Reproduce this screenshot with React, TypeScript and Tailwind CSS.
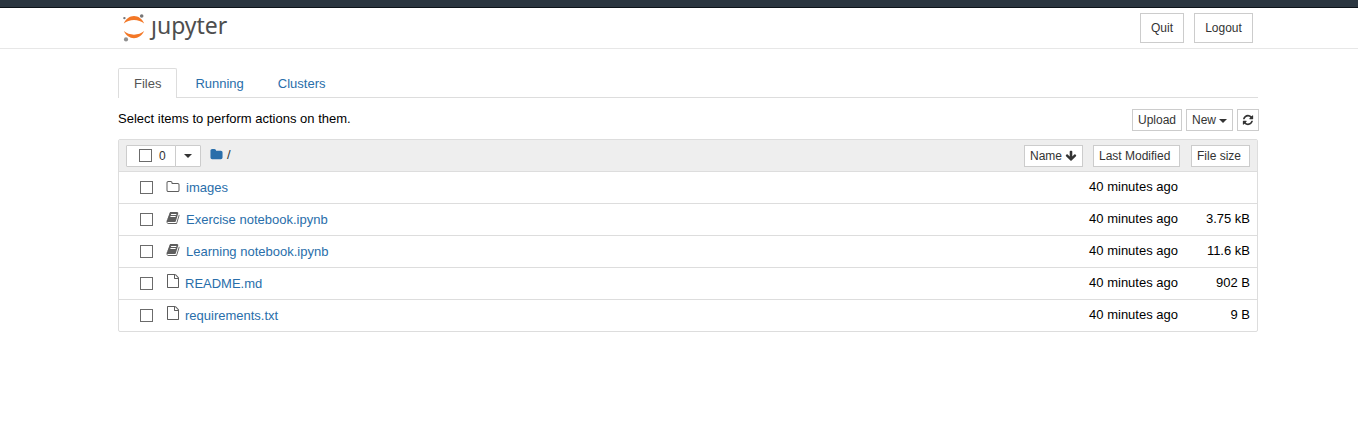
import React from "react";

const ICONS = {
  folder:
    "M1728 608v704q0 92-66 158t-158 66h-1216q-92 0-158-66t-66-158v-960q0-92 66-158t158-66h320q92 0 158 66t66 158v32h672q92 0 158 66t66 158z",
  folderOpen:
    "M1600 1312v-704q0-40-28-68t-68-28h-704q-40 0-68-28t-28-68v-64q0-40-28-68t-68-28h-320q-40 0-68 28t-28 68v960q0 40 28 68t68 28h1216q40 0 68-28t28-68zm128-704v704q0 92-66 158t-158 66h-1216q-92 0-158-66t-66-158v-960q0-92 66-158t158-66h320q92 0 158 66t66 158v32h672q92 0 158 66t66 158z",
  file: "M1596 380q28 28 48 76t20 88v1152q0 40-28 68t-68 28h-1344q-40 0-68-28t-28-68v-1600q0-40 28-68t68-28h896q40 0 88 20t76 48zm-444-244v376h376q-10-29-22-41l-313-313q-12-12-41-22zm384 1528v-1024h-416q-40 0-68-28t-28-68v-416h-768v1536h1280z",
  book: "M1703 478q40 57 18 129l-275 906q-19 64-76.5 107.5t-122.5 43.5h-923q-77 0-148.5-53.5t-99.5-131.5q-24-67-2-127 0-4 3-27t4-37q1-8-3-21.5t-3-19.5q2-11 8-21t16.5-23.5 16.5-23.5q23-38 45-91.5t30-91.5q3-10 .5-30t-.5-28q3-11 17-28t17-23q21-36 42-92t25-90q1-9-2.5-32t.5-28q4-13 22-30.5t22-22.5q19-26 42.5-84.5t27.5-96.5q1-8-3-25.5t-2-26.5q2-8 9-18t18-23 17-21q8-12 16.5-30.5t15-35 16-36 19.5-32 26.5-23.5 36-11.5 47.5 5.5l-1 3q38-9 51-9h761q74 0 114 56t18 130l-274 906q-36 119-71.5 153.5t-128.5 34.5h-869q-27 0-38 15-11 16-1 43 24 70 144 70h923q29 0 56-15.5t35-41.5l300-987q7-22 5-57 38 15 59 43zm-1064 2q-4 13 2 22.5t20 9.5h608q13 0 25.5-9.5t16.5-22.5l21-64q4-13-2-22.5t-20-9.5h-608q-13 0-25.5 9.5t-16.5 22.5zm-83 256q-4 13 2 22.5t20 9.5h608q13 0 25.5-9.5t16.5-22.5l21-64q4-13-2-22.5t-20-9.5h-608q-13 0-25.5 9.5t-16.5 22.5z",
  refresh:
    "M1639 1056q0 5-1 7-64 268-268 434.5t-478 166.5q-146 0-282.5-55t-243.5-157l-129 129q-19 19-45 19t-45-19-19-45v-448q0-26 19-45t45-19h448q26 0 45 19t19 45-19 45l-137 137q71 66 161 102t187 36q134 0 250-65t186-179q11-17 53-117 8-23 30-23h192q13 0 22.5 9.5t9.5 22.5zm25-800v448q0 26-19 45t-45 19h-448q-26 0-45-19t-19-45 19-45l138-138q-148-137-349-137-134 0-250 65t-186 179q-11 17-53 117-8 23-30 23h-199q-13 0-22.5-9.5t-9.5-22.5v-7q65-268 270-434.5t480-166.5q146 0 284 55.5t245 156.5l130-129q19-19 45-19t45 19 19 45z",
  arrowDown:
    "M1675 832q0 53-37 90l-651 652q-39 37-91 37-53 0-90-37l-651-652q-38-36-38-90 0-53 38-91l74-75q39-37 91-37 53 0 90 37l294 294v-704q0-52 38-90t90-38h128q52 0 90 38t38 90v704l294-294q37-37 90-37 52 0 91 37l75 75q37 39 37 91z",
};

type IconName = keyof typeof ICONS;

function Icon({ name, className }: { name: IconName; className: string }) {
  return (
    <svg viewBox="0 0 1792 1792" fill="currentColor" className={`shrink-0 ${className}`} aria-hidden="true">
      <path d={ICONS[name]} />
    </svg>
  );
}

function Caret() {
  return <span className="mt-px h-0 w-0 border-x-4 border-t-4 border-x-transparent border-t-[#333]" />;
}

function Checkbox() {
  return <span className="h-[13px] w-[13px] shrink-0 border border-[#6b6b6b] bg-white" />;
}

function Button({ className, children }: { className: string; children: React.ReactNode }) {
  return (
    <button
      className={`flex shrink-0 items-center whitespace-nowrap border border-[#ccc] bg-white text-xs text-[#333] ${className}`}
    >
      {children}
    </button>
  );
}

function Logo() {
  return (
    <div className="flex h-10 items-start pl-1" aria-label="jupyter">
      <svg viewBox="0 0 24 30" className="mt-[5px] h-[30px] w-6 shrink-0" aria-hidden="true">
        <path d="M1.800 10.500C3.900 5.800 7.800 3.100 12 3.100s8.100 2.700 10.200 7.400C19.400 8.200 15.900 6.900 12 6.900S4.600 8.200 1.800 10.500z" fill="#f37726" />
        <path d="M1.800 18.100C3.900 22.600 7.800 25.300 12 25.300s8.100-2.700 10.200-7.200C19.400 20.400 15.900 21.700 12 21.700S4.600 20.400 1.800 18.100z" fill="#f37726" />
        <circle cx="19.700" cy="3" r="1.800" fill="#767677" />
        <circle cx="2.400" cy="5.100" r="1.200" fill="#767677" />
        <circle cx="4" cy="26.400" r="2.100" fill="#8f8f8f" />
      </svg>
      <span className="ml-[5px] mt-[1px] font-['Noto_Sans',sans-serif] text-[23px] leading-[32px] text-[#4e4e4e]">
        ȷupyter
      </span>
    </div>
  );
}

type Entry = { name: string; icon: IconName; size: string };

const entries: Entry[] = [
  { name: "images", icon: "folderOpen", size: "" },
  { name: "Exercise notebook.ipynb", icon: "book", size: "3.75 kB" },
  { name: "Learning notebook.ipynb", icon: "book", size: "11.6 kB" },
  { name: "README.md", icon: "file", size: "902 B" },
  { name: "requirements.txt", icon: "file", size: "9 B" },
];

const iconSpacing: Partial<Record<IconName, string>> = {
  folderOpen: "mb-px ml-[13px] mr-px",
  book: "mb-[3px] ml-[13px] mr-px",
  file: "mb-[5px] ml-[13px]",
};

function Row({ entry }: { entry: Entry }) {
  return (
    <div className="flex h-8 items-center border-t border-[#ddd] pl-[21px] pr-[7px]">
      <Checkbox />
      <Icon name={entry.icon} className={`h-[14px] w-[14px] text-[#5e5e5e] ${iconSpacing[entry.icon]}`} />
      <a className="ml-[5px] mt-px text-[#296eaa]">{entry.name}</a>
      <span className="mb-px ml-auto">40 minutes ago</span>
      <span className="mb-px w-[72px] text-right">{entry.size}</span>
    </div>
  );
}

export default function App() {
  return (
    <div className="h-[446px] overflow-hidden bg-white font-['Liberation_Sans',Arial,sans-serif] text-[13px] leading-5 text-black">
      <div className="h-2 border-b border-[#0d1319] bg-[#2b3640]" />
      <header className="h-[41px] border-b border-[#e7e7e7]">
        <div className="ml-[118px] flex w-[1140px] items-start">
          <Logo />
          <div className="ml-auto mr-[5px] mt-[5px] flex gap-[10px]">
            <Button className="h-[30px] w-11 justify-center">Quit</Button>
            <Button className="h-[30px] w-[59px] justify-center">Logout</Button>
          </div>
        </div>
      </header>

      <main className="ml-[118px] w-[1140px] pt-[19px]">
        <nav className="flex h-[30px] border-b border-[#ddd]">
          <a className="h-[30px] w-[59px] rounded-t-[2px] border border-b-0 border-[#ddd] bg-white pl-[15px] pt-[5px] text-[#555]">
            Files
          </a>
          <a className="ml-[18.4px] pt-[6px] text-[#296eaa]">Running</a>
          <a className="ml-[34px] pt-[6px] text-[#296eaa]">Clusters</a>
        </nav>

        <div className="-mr-px flex h-[41px] items-start pt-[11px]">
          <span>Select items to perform actions on them.</span>
          <div className="ml-auto flex gap-1">
            <Button className="h-[22px] w-[50px] justify-center">Upload</Button>
            <Button className="h-[22px] w-[47px] gap-[3px] pl-[5px]">
              New
              <Caret />
            </Button>
            <Button className="h-[22px] w-[22px] justify-center">
              <Icon name="refresh" className="h-3 w-3" />
            </Button>
          </div>
        </div>

        <section className="rounded-[2px] border border-[#ddd]">
          <div className="flex h-[31px] items-center bg-[#eee] pl-[7px] pr-[7px]">
            <div className="flex">
              <Button className="h-[22px] w-[50px] gap-[7px] rounded-l-[1px] pl-3">
                <Checkbox />
                <span>0</span>
              </Button>
              <Button className="-ml-px h-[22px] w-[26px] justify-center rounded-r-[1px]">
                <Caret />
              </Button>
            </div>
            <Icon name="folder" className="mb-[2px] ml-[9px] h-[13px] w-[13px] text-[#296eaa]" />
            <span className="mb-[2px] ml-1 text-[#333]">/</span>
            <div className="ml-auto flex">
              <Button className="h-[22px] w-[59px] gap-[3px] pl-[5px]">
                Name
                <Icon name="arrowDown" className="h-3 w-3" />
              </Button>
              <Button className="ml-[10px] h-[22px] w-[87px] pl-[5px]">Last Modified</Button>
              <Button className="ml-[11px] h-[22px] w-[59px] pl-[5px]">File size</Button>
            </div>
          </div>
          {entries.map((entry) => (
            <Row key={entry.name} entry={entry} />
          ))}
        </section>
      </main>
    </div>
  );
}
